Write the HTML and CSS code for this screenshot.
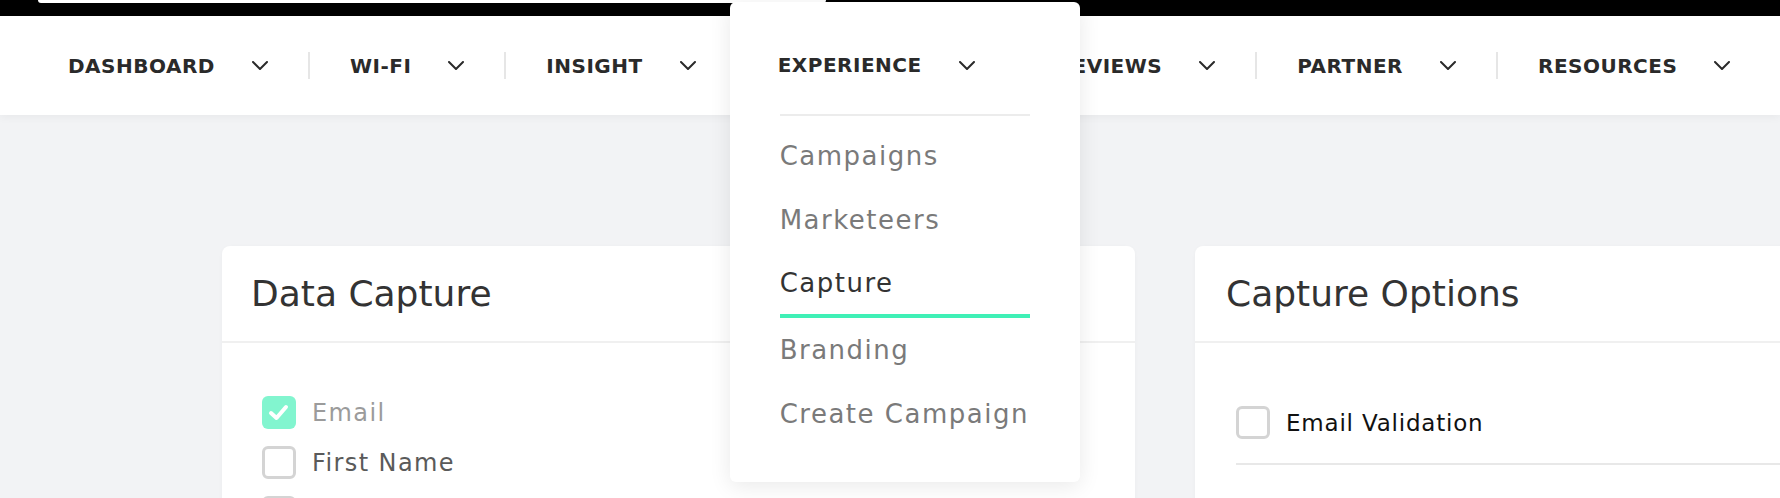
FILE: index.html
```html
<!DOCTYPE html>
<html lang="en">
<head>
<meta charset="utf-8">
<title>Capture</title>
<link rel="stylesheet" href="styles.css">
</head>
<body>
<div class="topbar"><div class="tab"></div></div>
<nav class="nav">
  <div class="nav-item"><span class="nav-label">DASHBOARD</span><svg class="chev" viewBox="0 0 16 9"><path d="M1 1 L8 8 L15 1"/></svg></div>
  <span class="sep"></span>
  <div class="nav-item"><span class="nav-label">WI-FI</span><svg class="chev" viewBox="0 0 16 9"><path d="M1 1 L8 8 L15 1"/></svg></div>
  <span class="sep"></span>
  <div class="nav-item"><span class="nav-label">INSIGHT</span><svg class="chev" viewBox="0 0 16 9"><path d="M1 1 L8 8 L15 1"/></svg></div>
  <span class="sep"></span>
  <div class="nav-item has-menu"><span class="nav-label">EXPERIENCE</span><svg class="chev" viewBox="0 0 16 9"><path d="M1 1 L8 8 L15 1"/></svg>
    <div class="menu">
      <div class="menu-head"><span class="nav-label">EXPERIENCE</span><svg class="chev" viewBox="0 0 16 9"><path d="M1 1 L8 8 L15 1"/></svg></div>
      <ul class="menu-list">
        <li class="menu-link">Campaigns</li>
        <li class="menu-link">Marketeers</li>
        <li class="menu-link active">Capture</li>
        <li class="menu-link">Branding</li>
        <li class="menu-link">Create Campaign</li>
      </ul>
    </div>
  </div>
  <span class="sep"></span>
  <div class="nav-item"><span class="nav-label">REVIEWS</span><svg class="chev" viewBox="0 0 16 9"><path d="M1 1 L8 8 L15 1"/></svg></div>
  <span class="sep"></span>
  <div class="nav-item"><span class="nav-label">PARTNER</span><svg class="chev" viewBox="0 0 16 9"><path d="M1 1 L8 8 L15 1"/></svg></div>
  <span class="sep"></span>
  <div class="nav-item"><span class="nav-label">RESOURCES</span><svg class="chev" viewBox="0 0 16 9"><path d="M1 1 L8 8 L15 1"/></svg></div>
</nav>
<main class="content">
  <section class="card card-left">
    <header class="card-head"><h2 class="card-title">Data Capture</h2></header>
    <div class="card-body">
      <div class="check-row">
        <span class="box checked"><svg viewBox="0 0 33 33"><path d="M9 17 L14.5 22 L24 11"/></svg></span>
        <span class="check-label muted">Email</span>
      </div>
      <div class="check-row">
        <span class="box"></span>
        <span class="check-label">First Name</span>
      </div>
      <div class="check-row">
        <span class="box"></span>
      </div>
    </div>
  </section>
  <section class="card card-right">
    <header class="card-head"><h2 class="card-title">Capture Options</h2></header>
    <div class="card-body options">
      <div class="check-row option">
        <span class="box"></span>
        <span class="check-label dark">Email Validation</span>
      </div>
    </div>
  </section>
</main>
</body>
</html>
```
FILE: styles.css
```css
* { box-sizing: border-box; }

html, body {
  margin: 0;
  padding: 0;
}

body {
  width: 1780px;
  height: 498px;
  overflow: hidden;
  background: #f2f3f5;
  font-family: "DejaVu Sans", "Liberation Sans", sans-serif;
  color: #333;
}

.topbar {
  height: 16px;
  background: #000;
}

.tab {
  margin-left: 38px;
  width: 788px;
  height: 3px;
  background: #fff;
  border-radius: 0 0 4px 4px;
}

.nav {
  position: relative;
  z-index: 5;
  display: flex;
  align-items: stretch;
  height: 99px;
  padding-left: 28px;
  background: #fff;
  box-shadow: 0 3px 8px rgba(0, 0, 0, 0.04);
}

.nav-item {
  display: flex;
  align-items: center;
  gap: 37px;
  padding: 0 40px;
}

.nav-label {
  font-size: 20px;
  font-weight: 700;
  letter-spacing: 0.5px;
  color: #2a2a2a;
}

.chev {
  width: 16px;
  height: 9px;
  flex: none;
}

.chev path {
  fill: none;
  stroke: #2a2a2a;
  stroke-width: 2;
  stroke-linecap: round;
  stroke-linejoin: round;
}

.sep {
  align-self: center;
  width: 2px;
  height: 27px;
  background: #e6e6e6;
}

.has-menu {
  position: relative;
}

.menu {
  position: absolute;
  z-index: 20;
  top: -14px;
  left: -8px;
  width: 350px;
  padding-top: 14px;
  background: #fff;
  border-radius: 6px;
  box-shadow: 0 4px 22px rgba(0, 0, 0, 0.09);
}

.menu-head {
  display: flex;
  align-items: center;
  gap: 37px;
  height: 98px;
  padding-left: 48px;
}

.menu-list {
  list-style: none;
  margin: 0 50px;
  padding: 8px 0 36px;
  border-top: 2px solid #ececec;
}

.menu-link {
  font-size: 26px;
  line-height: 64px;
  letter-spacing: 1.5px;
  color: #7a7a7a;
  white-space: nowrap;
}

.menu-link.active {
  line-height: 62px;
  color: #333;
  border-bottom: 4px solid #3ff0b6;
}

.content {
  display: flex;
  gap: 60px;
  padding: 131px 0 0 222px;
}

.card {
  flex: none;
  min-height: 320px;
  background: #fff;
  border-radius: 8px;
  box-shadow: 0 1px 4px rgba(0, 0, 0, 0.03);
}

.card-left {
  width: 913px;
}

.card-right {
  width: 700px;
}

.card-head {
  display: flex;
  align-items: center;
  height: 97px;
  padding-left: 29px;
  border-bottom: 2px solid #f0f0f0;
}

.card-right .card-head {
  padding-left: 31px;
}

.card-title {
  margin: 0;
  font-size: 36px;
  font-weight: 400;
  color: #333;
}

.card-body {
  padding: 53px 40px 0;
}

.card-body.options {
  padding: 63px 0 0 41px;
}

.check-row {
  display: flex;
  align-items: center;
  gap: 16px;
  height: 33px;
  margin-bottom: 17px;
}

.box {
  flex: none;
  width: 34px;
  height: 33px;
  border: 3px solid #d4d4d4;
  border-radius: 6px;
  background: #fff;
}

.box.checked {
  border: none;
  background: #82f5cf;
}

.box svg {
  display: block;
  width: 33px;
  height: 33px;
}

.box svg path {
  fill: none;
  stroke: #fff;
  stroke-width: 4;
  stroke-linecap: round;
  stroke-linejoin: round;
}

.check-label {
  font-size: 24px;
  letter-spacing: 1.4px;
  color: #5a5a5a;
}

.check-label.muted {
  color: #9b9b9b;
}

.check-label.dark {
  font-size: 23px;
  letter-spacing: 0.8px;
  color: #111;
}

.option {
  height: auto;
  padding-bottom: 24px;
  margin-bottom: 0;
  border-bottom: 2px solid #e8e8e8;
  gap: 16px;
}
```
